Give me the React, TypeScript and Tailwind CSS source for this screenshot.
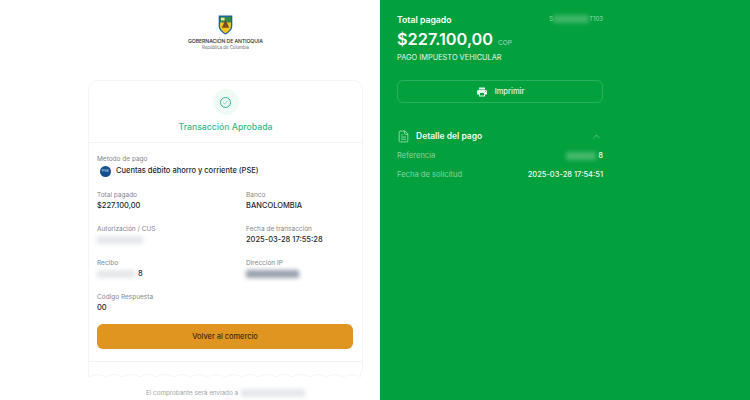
import React from "react";
import { ChevronUp, FileText, Check } from "lucide-react";
import { MdPrint } from "react-icons/md";

const Blur = ({ w, tone = "bg-gray-300" }: { w: string; tone?: string }) => (
  <span className={`inline-block h-[8px] ${w} ${tone} blur-[2px]`} />
);

const Field = ({ label, children }: { label: string; children: React.ReactNode }) => (
  <div className="flex flex-col">
    <span className="text-[6.5px] leading-[10px] text-[#83868c]">{label}</span>
    <span className="flex h-[12px] items-center text-[7.5px] font-medium leading-[12px] text-[#23272e]">{children}</span>
  </div>
);

const Logo = () => (
  <svg width="15" height="20" viewBox="0 0 16 22" className="block">
    <path d="M0.5 0.5H15.5V12C15.5 17 11 19.5 8 21.5C5 19.5 0.5 17 0.5 12Z" fill="#1f5fa8" />
    <path d="M2 8H14V12C14 16 10.5 18.5 8 20C5.5 18.5 2 16 2 12Z" fill="#f2c81e" />
    <path d="M2 2H14V8H2Z" fill="#2e8b3d" />
    <path d="M8 5L12 14H4Z" fill="#7a4a20" />
    <path d="M3 3H7V6H3Z" fill="#dfe8c0" />
  </svg>
);

const scallop = `M0.5 0 V5 ${"q8.5 -5 17 0 ".repeat(16)} V0`;

export default function App() {
  return (
    <div className="flex h-[400px] w-[750px] overflow-hidden bg-white font-['Inter',sans-serif]">
      <div className="w-[380px] bg-white pl-[88px]">
        <div className="flex w-[275px] flex-col items-center">
          <div className="mt-[15px] flex flex-col items-center">
            <Logo />
            <span className="mt-[3px] text-[5.2px] font-medium leading-[7px] tracking-[-0.1px] text-[#2a2a2a]">GOBERNACIÓN DE ANTIOQUIA</span>
            <span className="text-[4.3px] leading-[6px] text-[#666]">República de Colombia</span>
          </div>

          <div className="mt-[29px] flex h-[292px] w-full flex-col rounded-t-[10px] border-x border-t border-[#f4f4f6]">
            <div className="flex h-[62px] flex-col items-center border-b border-[#f3f4f5] pt-[8px]">
              <div className="flex h-[26px] w-[26px] items-center justify-center rounded-full bg-[#effbf5]">
                <div className="flex h-[11px] w-[11px] items-center justify-center rounded-full border border-[#34b98a]">
                  <Check size={7} strokeWidth={2} className="text-[#34b98a]" />
                </div>
              </div>
              <span className="mt-[6px] text-[8.7px] font-medium leading-[13px] text-[#35b98b]">Transacción Aprobada</span>
            </div>

            <div className="flex flex-col px-[8px] pt-[11px]">
              <span className="text-[6.5px] leading-[11px] text-[#83868c]">Método de pago</span>
              <div className="ml-[3px] flex items-center gap-[5px]">
                <span className="flex h-[11px] w-[11px] items-center justify-center rounded-full bg-[#14508c] text-[4px] leading-none text-[#cfe0f0]">PSE</span>
                <span className="text-[7.5px] font-medium leading-[12px] text-[#23272e]">Cuentas débito ahorro y corriente (PSE)</span>
              </div>

              <div className="mt-[13px] grid grid-cols-[149px_1fr] gap-y-[12px]">
                <Field label="Total pagado">$227.100,00</Field>
                <Field label="Banco">BANCOLOMBIA</Field>
                <Field label="Autorización / CUS"><Blur w="w-[46px]" tone="bg-gray-200" /></Field>
                <Field label="Fecha de transacción">2025-03-28 17:55:28</Field>
                <Field label="Recibo"><Blur w="w-[38px]" tone="bg-gray-200" /><span className="ml-[3px]">8</span></Field>
                <Field label="Dirección IP"><Blur w="w-[53px]" tone="bg-gray-400" /></Field>
                <Field label="Código Respuesta">00</Field>
              </div>

              <button className="mt-[10px] flex h-[25px] w-[256px] items-center justify-center rounded-[6px] bg-[#e09520] text-[7.4px] font-medium text-[#3d2a10]">
                Volver al comercio
              </button>
            </div>

            <div className="mt-auto h-[11px] border-t border-[#f1f2f3]" />
          </div>
          <svg width="275" height="6" viewBox="0 0 275 6" className="block">
            <path d={scallop} fill="none" stroke="#f4f4f6" />
          </svg>

          <div className="mt-[10px] flex items-center gap-[3px] text-[6.3px] leading-[10px] text-[#a2a5aa]">
            <span>El comprobante será enviado a</span>
            <Blur w="w-[64px]" tone="bg-gray-200" />
          </div>
        </div>
      </div>

      <div className="flex-1 bg-[#03a03e] pl-[17px] pt-[14px] text-white">
        <div className="flex w-[206px] flex-col">
          <div className="flex items-start justify-between">
            <span className="text-[8.7px] font-semibold leading-[13px]">Total pagado</span>
            <span className="flex items-center text-[6px] leading-[9px] text-[#9ed9b4]">
              S<Blur w="w-[36px]" tone="bg-[#3fb566]" />T103
            </span>
          </div>
          <div className="mt-[1px] flex items-baseline gap-[5px]">
            <span className="text-[16.3px] font-semibold leading-[22px]">$227.100,00</span>
            <span className="text-[6.5px] text-[#a6dcbb]">COP</span>
          </div>
          <span className="mt-[2px] text-[7.4px] leading-[11px] text-[#e6f6ec]">PAGO IMPUESTO VEHICULAR</span>

          <button className="mt-[17px] flex h-[23px] w-[206px] items-center justify-center gap-[7px] rounded-[6px] border border-[#2bb05f] text-[7.5px] font-medium text-[#e6f6ec]">
            <MdPrint size={12} className="text-[#e6f6ec]" />
            Imprimir
          </button>

          <div className="mt-[27px] flex h-[13px] items-center justify-between">
            <div className="flex items-center gap-[6px]">
              <FileText size={13} strokeWidth={1.25} className="text-[#cdeeda]" />
              <span className="text-[8.5px] font-semibold text-[#f2fbf5]">Detalle del pago</span>
            </div>
            <ChevronUp size={11} strokeWidth={1.25} className="mr-[1px] text-[#a6dcbb]" />
          </div>

          <div className="mt-[7px] flex h-[12px] items-center justify-between text-[7.6px] leading-[12px]">
            <span className="text-[#85d2a2]">Referencia</span>
            <span className="flex items-center font-medium text-[#f2fbf5]"><Blur w="w-[30px]" tone="bg-[#45b86c]" /><span className="ml-[2px]">8</span></span>
          </div>
          <div className="mt-[7px] flex h-[12px] items-center justify-between text-[7.6px] leading-[12px]">
            <span className="text-[#85d2a2]">Fecha de solicitud</span>
            <span className="text-[7.5px] font-medium text-[#f2fbf5]">2025-03-28 17:54:51</span>
          </div>
        </div>
      </div>
    </div>
  );
}
